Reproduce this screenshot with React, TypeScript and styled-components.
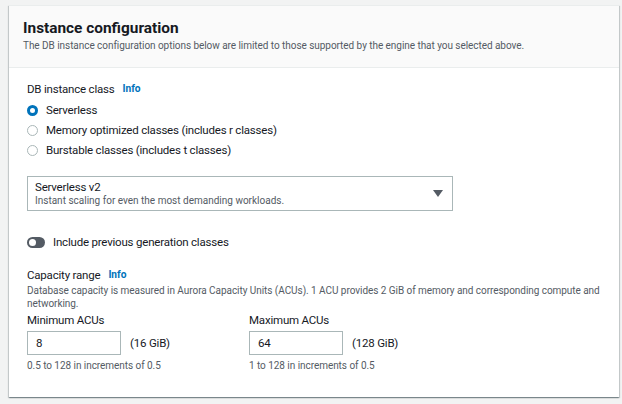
import React from "react";
import styled, { createGlobalStyle } from "styled-components";

const Global = createGlobalStyle`
  html, body { margin: 0; padding: 0; background: #f2f3f3; }
  body { font-family: Roboto, "Noto Sans", sans-serif; color: #16191f; }
  * { box-sizing: border-box; }
`;

const Page = styled.div`
  padding: 5px 3px 7px 9px;
  width: 622px;
  height: 404px;
`;

const Card = styled.section`
  background: #fff;
  border-top: 1px solid #eaeded;
  box-shadow: 0 1px 1px 0 rgba(0, 28, 36, 0.3), 1px 1px 1px 0 rgba(0, 28, 36, 0.15),
    -1px 1px 1px 0 rgba(0, 28, 36, 0.15);
  height: 392px;
  width: 610px;
`;

const Header = styled.header`
  background: #fafafa;
  border-bottom: 1px solid #eaeded;
  padding: 12px 14px 15px;
`;

const Title = styled.h2`
  margin: 0;
  font-size: 15.4px;
  line-height: 20px;
  font-weight: 700;
`;

const Desc = styled.p<{ $top?: number }>`
  margin: ${(p) => p.$top ?? 1}px 0 0;
  font-size: 10px;
  letter-spacing: -0.05px;
  line-height: 13px;
  color: #545b64;
`;

const Body = styled.div`
  padding: 13px 18px 20px 18px;
`;

const Label = styled.div<{ $top?: number }>`
  display: flex;
  align-items: center;
  gap: 8px;
  margin-top: ${(p) => p.$top ?? 0}px;
  font-size: 11.5px;
  letter-spacing: -0.2px;
  line-height: 16px;
`;

const Info = styled.a`
  color: #0073bb;
  font-weight: 700;
  font-size: 10.2px;
  letter-spacing: 0;
  text-decoration: none;
`;

const RadioGroup = styled.div`
  margin-top: 3px;
  display: flex;
  flex-direction: column;
`;

const RadioRow = styled.label`
  display: flex;
  align-items: center;
  gap: 8px;
  height: 20px;
  font-size: 11.5px;
  letter-spacing: -0.2px;
`;

const RadioDot = styled.span<{ $checked?: boolean }>`
  width: 11px;
  height: 11px;
  border-radius: 50%;
  flex: none;
  background: #fff;
  border: ${(p) => (p.$checked ? "3.5px solid #0073bb" : "1px solid #aab7b8")};
`;

const Select = styled.div`
  margin-top: 16px;
  width: 426px;
  height: 35px;
  border: 1px solid #aab7b8;
  padding: 3px 9px 3px 7px;
  display: flex;
  align-items: center;
  justify-content: space-between;
`;

const SelectText = styled.div`
  display: flex;
  flex-direction: column;
`;

const SelectMain = styled.span`
  font-size: 11.5px;
  letter-spacing: -0.2px;
  line-height: 14px;
`;

const SelectSub = styled.span`
  font-size: 10px;
  line-height: 13px;
  color: #545b64;
`;

const ToggleRow = styled.div`
  margin-top: 23px;
  display: flex;
  align-items: center;
  gap: 8px;
  font-size: 11.5px;
  letter-spacing: -0.2px;
  line-height: 16px;
`;

const Toggle = styled.span`
  width: 18px;
  height: 11px;
  border-radius: 6px;
  background: #545b64;
  position: relative;
  flex: none;
  &::after {
    content: "";
    position: absolute;
    left: 2px;
    top: 2px;
    width: 7px;
    height: 7px;
    border-radius: 50%;
    background: #fff;
  }
`;

const Fields = styled.div`
  margin-top: 2px;
  display: grid;
  grid-template-columns: 222px 222px;
`;

const Field = styled.div`
  display: flex;
  flex-direction: column;
`;

const InputRow = styled.div`
  margin-top: 3px;
  display: flex;
  align-items: center;
  gap: 9px;
  font-size: 11.5px;
  letter-spacing: -0.2px;
`;

const Input = styled.div`
  width: 94px;
  height: 24px;
  border: 1px solid #aab7b8;
  padding: 0 8px;
  display: flex;
  align-items: center;
`;

export default function App() {
  return (
    <>
      <Global />
      <Page>
        <Card>
          <Header>
            <Title>Instance configuration</Title>
            <Desc>
              The DB instance configuration options below are limited to those supported by the engine that you selected above.
            </Desc>
          </Header>
          <Body>
            <Label>
              DB instance class <Info>Info</Info>
            </Label>
            <RadioGroup>
              <RadioRow>
                <RadioDot $checked />
                Serverless
              </RadioRow>
              <RadioRow>
                <RadioDot />
                Memory optimized classes (includes r classes)
              </RadioRow>
              <RadioRow>
                <RadioDot />
                Burstable classes (includes t classes)
              </RadioRow>
            </RadioGroup>
            <Select>
              <SelectText>
                <SelectMain>Serverless v2</SelectMain>
                <SelectSub>Instant scaling for even the most demanding workloads.</SelectSub>
              </SelectText>
              <svg width="10" height="7" viewBox="0 0 10 7">
                <path d="M0 0h10L5 7z" fill="#545b64" />
              </svg>
            </Select>
            <ToggleRow>
              <Toggle />
              Include previous generation classes
            </ToggleRow>
            <Label $top={17}>
              Capacity range <Info>Info</Info>
            </Label>
            <Desc>
              Database capacity is measured in Aurora Capacity Units (ACUs). 1 ACU provides 2 GiB of memory and corresponding compute and networking.
            </Desc>
            <Fields>
              <Field>
                <Label>Minimum ACUs</Label>
                <InputRow>
                  <Input>8</Input>(16 GiB)
                </InputRow>
                <Desc $top={4}>0.5 to 128 in increments of 0.5</Desc>
              </Field>
              <Field>
                <Label>Maximum ACUs</Label>
                <InputRow>
                  <Input>64</Input>(128 GiB)
                </InputRow>
                <Desc $top={4}>1 to 128 in increments of 0.5</Desc>
              </Field>
            </Fields>
          </Body>
        </Card>
      </Page>
    </>
  );
}
